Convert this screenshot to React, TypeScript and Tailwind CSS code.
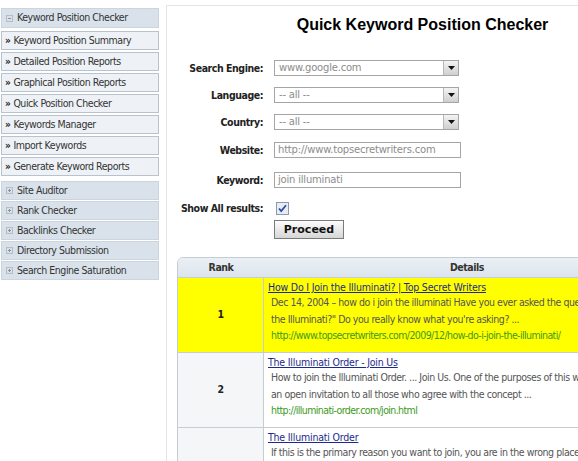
import React from 'react';

const font = "font-['DejaVu_Sans_Condensed','DejaVu_Sans',sans-serif] [font-stretch:condensed] tracking-[-0.45px]";

const tools = [
  'Keyword Position Summary',
  'Detailed Position Reports',
  'Graphical Position Reports',
  'Quick Position Checker',
  'Keywords Manager',
  'Import Keywords',
  'Generate Keyword Reports',
];

const sections = ['Site Auditor', 'Rank Checker', 'Backlinks Checker', 'Directory Submission', 'Search Engine Saturation'];

const results = [
  {
    rank: 1,
    title: 'How Do I Join the Illuminati? | Top Secret Writers',
    lines: [
      'Dec 14, 2004 \u2013 how do i join the illuminati Have you ever asked the question, "How do I join',
      'the Illuminati?" Do you really know what you\'re asking? ...',
    ],
    url: 'http://www.topsecretwriters.com/2009/12/how-do-i-join-the-illuminati/',
    hit: true,
  },
  {
    rank: 2,
    title: 'The Illuminati Order - Join Us',
    lines: [
      'How to join the Illuminati Order. ... Join Us. One of the purposes of this website is to extend',
      'an open invitation to all those who agree with the concept ...',
    ],
    url: 'http://illuminati-order.com/join.html',
    hit: false,
  },
  {
    rank: 3,
    title: 'The Illuminati Order',
    lines: [
      'If this is the primary reason you want to join, you are in the wrong place. Please go back',
      'to the main page and read about the Order first. Membership is open to all',
      'who share the goals described there ...',
    ],
    url: 'http://illuminati-order.com/',
    hit: false,
  },
];

const BoxIcon = ({ plus }: { plus?: boolean }) => (
  <svg width="7" height="7" viewBox="0 0 7 7" className="shrink-0">
    <rect x="0.5" y="0.5" width="6" height="6" fill="none" stroke="#b4bcc4" />
    <line x1="2" y1="3.5" x2="5" y2="3.5" stroke="#8a929a" />
    {plus && <line x1="3.5" y1="2" x2="3.5" y2="5" stroke="#8a929a" />}
  </svg>
);

const Select = ({ value }: { value: string }) => (
  <div className="w-[185px] h-[16px] border border-[#a5a5a5] bg-white flex items-center">
    <span className="flex-1 pl-[4px] font-['DejaVu_Sans',sans-serif] [font-stretch:normal] text-[10px] tracking-[-0.2px] text-[#8c8c8c] leading-none">{value}</span>
    <div className="w-[15px] h-[14px] border-l border-[#b8b8b8] bg-gradient-to-b from-[#f4f4f4] to-[#cfcfcf] flex items-center justify-center">
      <svg width="7" height="4" viewBox="0 0 7 4">
        <path d="M0 0h7L3.5 4z" fill="#111" />
      </svg>
    </div>
  </div>
);

const Input = ({ value }: { value: string }) => (
  <div className="w-[187px] h-[16px] border border-[#a5a5a5] bg-white flex items-center pl-[3px] font-['DejaVu_Sans',sans-serif] [font-stretch:normal] text-[10px] tracking-[-0.2px] text-[#8c8c8c] leading-none">
    {value}
  </div>
);

const Row = ({ label, children, className }: { label: string; children: React.ReactNode; className?: string }) => (
  <div className={`flex items-center h-[16px] ${className ?? ''}`}>
    <div className="w-[107px] pr-[11px] text-right font-bold text-[10.5px] leading-none text-[#222] whitespace-nowrap">{label}</div>
    {children}
  </div>
);

export default function App() {
  return (
    <div className={`w-[578px] h-[461px] overflow-hidden bg-white flex text-[10.5px] text-[#333] ${font}`}>
      {/* left navigation */}
      <aside className="w-[166px] shrink-0 pl-px pr-[7px] pt-[8px]">
        <div className="h-[20px] bg-[#d9e2ea] border border-[#ccd5de] flex items-center gap-[4px] pl-[4px] text-[#333]">
          <BoxIcon />
          <span>Keyword Position Checker</span>
        </div>
        <div className="mt-[3px] flex flex-col gap-[2px]">
          {tools.map((t) => (
            <div key={t} className="h-[19px] bg-[#eef2f6] border border-[#b9c3cd] flex items-center pl-[3px] text-[#333] whitespace-nowrap">
              <span className="font-bold text-[10px] mr-[3px] text-[#222]">»</span>
              {t}
            </div>
          ))}
        </div>
        <div className="mt-[5px] flex flex-col gap-px">
          {sections.map((s) => (
            <div key={s} className="h-[19px] bg-[#d9e2ea] border border-[#ccd5de] flex items-center gap-[4px] pl-[4px] text-[#333] whitespace-nowrap">
              <BoxIcon plus />
              <span>{s}</span>
            </div>
          ))}
        </div>
      </aside>

      {/* main panel */}
      <main className="w-[512px] shrink-0 mt-[5px] border-l border-t border-[#e4e4e4]">
        <h1 className="mt-[9px] text-center font-['Liberation_Sans',Arial,sans-serif] [font-stretch:normal] tracking-normal font-bold text-[16px] leading-[20px] text-black">
          Quick Keyword Position Checker
        </h1>

        <div className="mt-[25px] flex flex-col">
          <Row label="Search Engine:">
            <Select value="www.google.com" />
          </Row>
          <Row label="Language:" className="mt-[11px]">
            <Select value="-- all --" />
          </Row>
          <Row label="Country:" className="mt-[11px]">
            <Select value="-- all --" />
          </Row>
          <Row label="Website:" className="mt-[12px]">
            <Input value="http://www.topsecretwriters.com" />
          </Row>
          <Row label="Keyword:" className="mt-[14px]">
            <Input value="join illuminati" />
          </Row>
          <Row label="Show All results:" className="mt-[12px]">
            <svg width="13" height="13" viewBox="0 0 13 13" className="ml-[2px]">
              <rect x="0.5" y="0.5" width="12" height="12" fill="#e9edf3" stroke="#8a9aae" />
              <path d="M3 6.5l2.2 2.6L10 3.2" fill="none" stroke="#2a4fa8" strokeWidth="1.8" />
            </svg>
          </Row>
          <div className="mt-[4px] pl-[107px]">
            <button className="w-[70px] h-[19px] border border-[#7a7a7a] bg-gradient-to-b from-[#fdfdfd] to-[#d6d6d6] font-['DejaVu_Sans',sans-serif] [font-stretch:normal] font-bold text-[11px] tracking-normal text-[#111] leading-none">
              Proceed
            </button>
          </div>
        </div>

        {/* results */}
        <div className="mt-[18px] ml-[10px] w-[494px] border border-[#c4ccd4] rounded-tl-[6px] overflow-hidden">
          <div className="flex h-[20px] bg-gradient-to-b from-[#eaf0f5] to-[#dde5ec] border-b border-[#c4ccd4] font-bold text-[#333]">
            <div className="w-[86px] flex items-center justify-center">Rank</div>
            <div className="flex-1 flex items-center justify-center">Details</div>
          </div>
          {results.map((r) => (
            <div key={r.rank} className={`flex border-b border-[#c4ccd4] ${r.hit ? 'bg-[#ffff00]' : ''}`}>
              <div className={`w-[86px] shrink-0 border-r border-[#c4ccd4] flex items-center justify-center font-bold text-[#222] ${r.hit ? '' : 'bg-[#f4f6f8]'}`}>
                {r.rank}
              </div>
              <div className={`flex-1 pt-[2px] pb-[10px] pl-[4px] overflow-hidden ${r.hit ? '' : 'bg-white'}`}>
                <a className="block leading-[14px] tracking-[-0.2px] text-[#1c2a8c] underline whitespace-nowrap">{r.title}</a>
                <div className="pl-[3px] text-[#555]">
                  {r.lines.map((l) => (
                    <div key={l} className="leading-[17px] whitespace-nowrap">{l}</div>
                  ))}
                  <div className="leading-[14px] tracking-[-0.6px] text-[#3d9a22] whitespace-nowrap">{r.url}</div>
                </div>
              </div>
            </div>
          ))}
        </div>
      </main>
    </div>
  );
}
